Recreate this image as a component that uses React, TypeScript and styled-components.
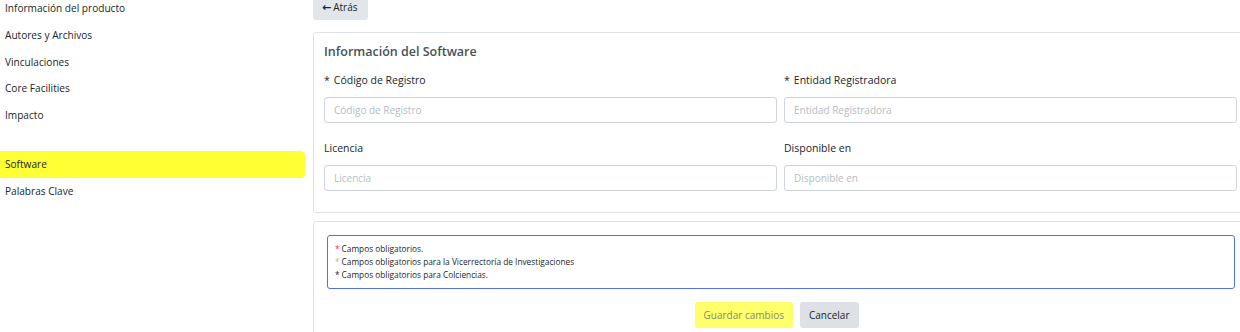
import styled, { createGlobalStyle } from 'styled-components'

const GlobalStyle = createGlobalStyle`
    html, body {
        margin: 0;
        padding: 0;
        background: #ffffff;
        overflow: hidden;
    }
    body {
        font-family: 'Open Sans', 'Noto Sans', 'Liberation Sans', sans-serif;
        color: #212529;
    }
    * {
        box-sizing: border-box;
    }
`

const Page = styled.div`
    display: flex;
    align-items: flex-start;
    width: 1260px;
    height: 332px;
    overflow: hidden;
`

const Sidebar = styled.nav`
    width: 305px;
    flex-shrink: 0;
    margin-top: -5px;
    display: flex;
    flex-direction: column;
`

const SideItem = styled.div<{ $active?: boolean }>`
    height: 26.7px;
    display: flex;
    align-items: center;
    padding-left: 5px;
    font-size: 10.1px;
    color: #212529;
    background: ${(p) => (p.$active ? '#ffff33' : 'transparent')};
    border-radius: 0 4px 4px 0;
`

const SideSpacer = styled.div`
    height: 22.5px;
`

const Main = styled.main`
    width: 936px;
    margin-left: 8px;
    margin-top: -6px;
    display: flex;
    flex-direction: column;
    align-items: flex-start;
`

const BackButton = styled.button`
    height: 26px;
    padding: 0 10px 0 9px;
    border: none;
    border-radius: 3px;
    background: #e2e6ea;
    color: #212529;
    font-family: inherit;
    font-size: 10px;
    display: flex;
    align-items: center;
    gap: 2px;
`

const Arrow = styled.span`
    font-family: 'DejaVu Sans', sans-serif;
    font-size: 11px;
    font-weight: bold;
    line-height: 1;
`

const Card = styled.section<{ $gap: number }>`
    width: 100%;
    margin-top: ${(p) => p.$gap}px;
    border: 1px solid #dee2e6;
    border-radius: 3px;
    background: #fff;
`

const InfoCard = styled(Card)`
    padding: 10px 10px 21px 10px;
`

const Title = styled.h3`
    margin: 0 0 13px 0;
    font-size: 12.5px;
    font-weight: 600;
    color: #495057;
    line-height: 17px;
`

const Grid = styled.div`
    display: grid;
    grid-template-columns: 453px 453px;
    column-gap: 7px;
    row-gap: 18px;
`

const Field = styled.div`
    display: flex;
    flex-direction: column;
`

const Label = styled.label`
    font-size: 10.5px;
    font-weight: 500;
    color: #212529;
    line-height: 14px;
    margin-bottom: 10px;
`

const Star = styled.span<{ $color?: string }>`
    color: ${(p) => p.$color || '#212529'};
    margin-right: 4px;
`

const NoteStar = styled(Star)`
    margin-right: 2px;
`

const Input = styled.input`
    height: 26px;
    border: 1px solid #ced4da;
    border-radius: 3px;
    padding: 0 9px;
    font-family: inherit;
    font-size: 10px;
    color: #495057;
    &::placeholder {
        color: #b6bcc2;
    }
`

const ActionCard = styled(Card)`
    padding: 13px 13px 20px 13px;
    display: flex;
    flex-direction: column;
    align-items: stretch;
`

const Notes = styled.div`
    border: 1px solid #5470ef;
    border-radius: 3px;
    padding: 6px 10px 7px 7px;
    font-size: 8.3px;
    line-height: 13px;
    color: #212529;
`

const Buttons = styled.div`
    display: flex;
    justify-content: center;
    gap: 7px;
    margin-top: 13px;
    padding-right: 9px;
`

const ActionButton = styled.button<{ $primary?: boolean }>`
    height: 26px;
    padding: 0 9px;
    border: none;
    border-radius: 3px;
    font-family: inherit;
    font-size: 10px;
    background: ${(p) => (p.$primary ? '#ffff6b' : '#dde0e4')};
    color: ${(p) => (p.$primary ? '#8a8a6a' : '#212529')};
`

const menu = [
    'Información del producto',
    'Autores y Archivos',
    'Vinculaciones',
    'Core Facilities',
    'Impacto',
]

const App = () => {
    return (
        <>
            <GlobalStyle />
            <Page>
                <Sidebar>
                    {menu.map((m) => (
                        <SideItem key={m}>{m}</SideItem>
                    ))}
                    <SideSpacer />
                    <SideItem $active>Software</SideItem>
                    <SideItem>Palabras Clave</SideItem>
                </Sidebar>
                <Main>
                    <BackButton>
                        <Arrow>&#8592;</Arrow>Atrás
                    </BackButton>
                    <InfoCard $gap={12}>
                        <Title>Información del Software</Title>
                        <Grid>
                            <Field>
                                <Label>
                                    <Star>*</Star>Código de Registro
                                </Label>
                                <Input placeholder="Código de Registro" />
                            </Field>
                            <Field>
                                <Label>
                                    <Star>*</Star>Entidad Registradora
                                </Label>
                                <Input placeholder="Entidad Registradora" />
                            </Field>
                            <Field>
                                <Label>Licencia</Label>
                                <Input placeholder="Licencia" />
                            </Field>
                            <Field>
                                <Label>Disponible en</Label>
                                <Input placeholder="Disponible en" />
                            </Field>
                        </Grid>
                    </InfoCard>
                    <ActionCard $gap={8}>
                        <Notes>
                            <div>
                                <NoteStar $color="#e8303a">*</NoteStar>Campos obligatorios.
                            </div>
                            <div>
                                <NoteStar $color="#f5a97a">*</NoteStar>Campos obligatorios para la Vicerrectoría de Investigaciones
                            </div>
                            <div>
                                <NoteStar>*</NoteStar>Campos obligatorios para Colciencias.
                            </div>
                        </Notes>
                        <Buttons>
                            <ActionButton $primary>Guardar cambios</ActionButton>
                            <ActionButton>Cancelar</ActionButton>
                        </Buttons>
                    </ActionCard>
                </Main>
            </Page>
        </>
    )
}

export default App
